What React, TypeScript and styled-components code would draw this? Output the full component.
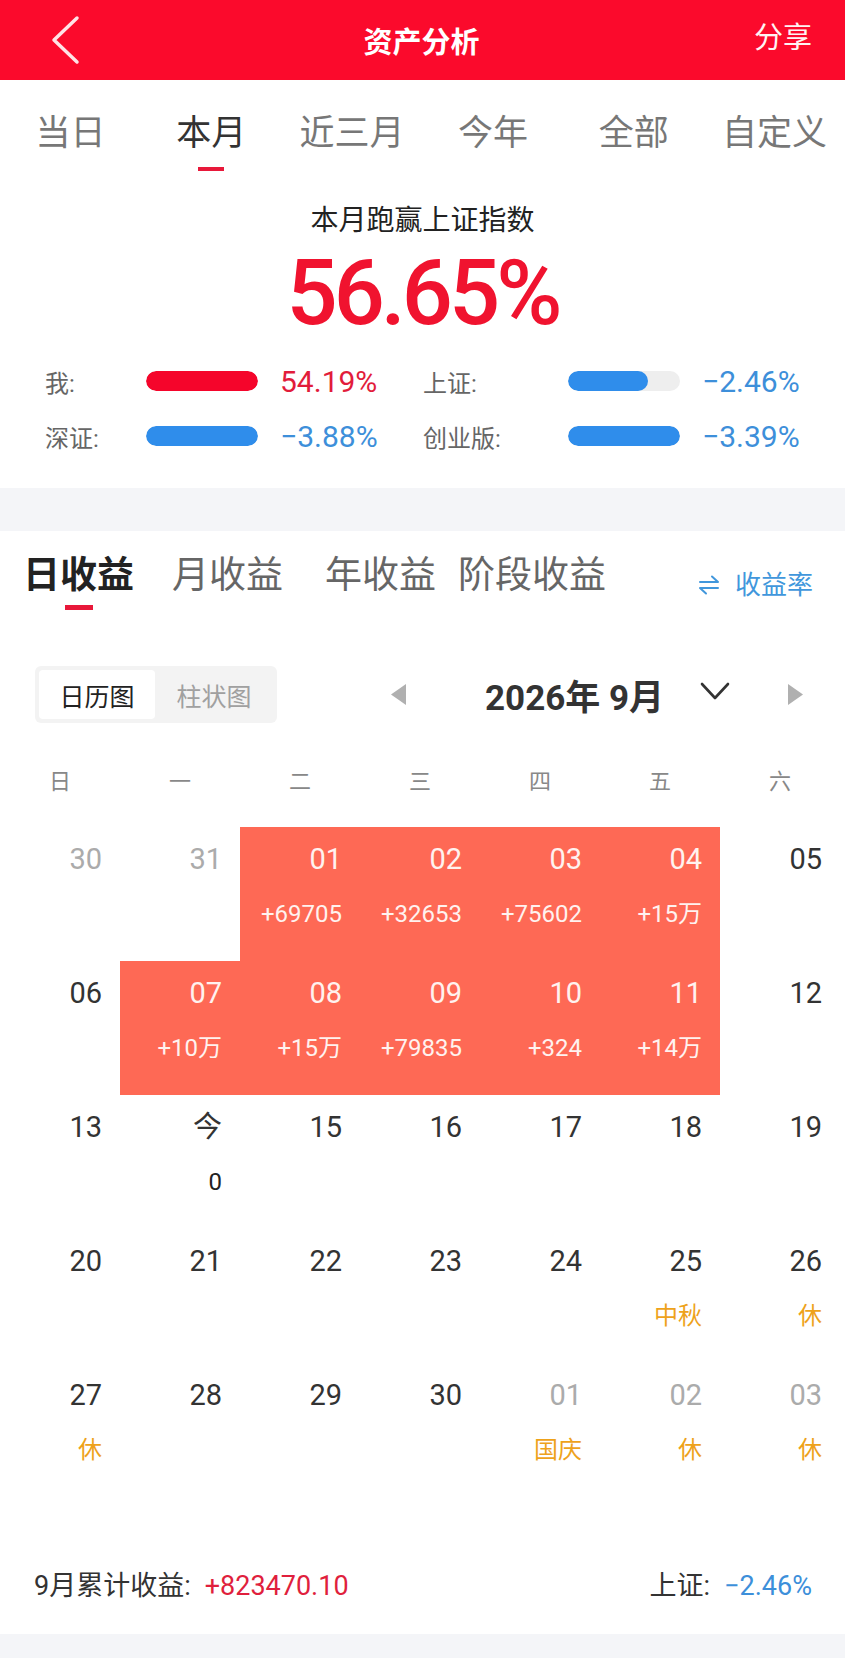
import React from 'react';
import styled, { createGlobalStyle } from 'styled-components';

const GlobalStyle = createGlobalStyle`
  html, body {
    margin: 0;
    padding: 0;
    background: #ffffff;
  }
  body {
    font-family: Roboto, "Noto Sans CJK SC", "Noto Sans", sans-serif;
    color: #333;
  }
`;

const Page = styled.div`
  width: 845px;
  min-height: 1658px;
  display: flex;
  flex-direction: column;
  background: #fff;
`;

const Header = styled.header`
  height: 80px;
  background: #fb0a2c;
  display: flex;
  align-items: center;
`;

const BackButton = styled.div`
  width: 40px;
  height: 50px;
  margin-left: 45px;
  display: flex;
`;

const Title = styled.h1`
  flex: 1;
  margin: 0;
  text-align: center;
  font-size: 29px;
  font-weight: 700;
  color: #fff;
  padding-left: 4px;
`;

const Share = styled.div`
  font-size: 29px;
  color: #fff3f3;
  padding-right: 33px;
  padding-bottom: 10px;
`;

const PeriodBar = styled.nav`
  display: flex;
  padding-top: 34px;
`;

const PeriodTab = styled.div<{ $active?: boolean }>`
  flex: 1;
  display: flex;
  flex-direction: column;
  align-items: center;
  font-size: 35px;
  line-height: 40px;
  color: ${(p) => (p.$active ? '#333' : '#777')};
`;

const TabMark = styled.span<{ $show?: boolean; $w: number; $h: number; $gap: number }>`
  display: block;
  width: ${(p) => p.$w}px;
  height: ${(p) => p.$h}px;
  margin-top: ${(p) => p.$gap}px;
  background: ${(p) => (p.$show ? '#e8183a' : 'transparent')};
`;

const Beat = styled.div`
  margin-top: 32px;
  text-align: center;
  font-size: 28px;
  line-height: 36px;
  color: #222;
`;

const BigNumber = styled.div`
  margin-top: 10px;
  text-align: center;
  font-size: 90px;
  line-height: 90px;
  font-weight: 500;
  letter-spacing: -4px;
  color: #f0132f;
`;

const StatsGrid = styled.div`
  display: grid;
  grid-template-columns: 101px 112px 165px 145px 112px 1fr;
  grid-auto-rows: 44px;
  row-gap: 11px;
  align-items: center;
  padding: 0 0 30px 45px;
  margin-top: 20px;
`;

const StatLabel = styled.span`
  font-size: 24px;
  color: #666;
`;

const Track = styled.div`
  height: 20px;
  border-radius: 10px;
  background: #eeeeee;
  overflow: hidden;
`;

const Fill = styled.div<{ $color: string }>`
  height: 100%;
  border-radius: 10px;
  background: ${(p) => p.$color};
`;

const StatValue = styled.span<{ $color: string }>`
  padding-left: 22px;
  font-size: 30px;
  color: ${(p) => p.$color};
`;

const Gap = styled.div`
  height: 43px;
  background: #f4f5f8;
`;

const IncomeBar = styled.div`
  display: flex;
  align-items: flex-start;
  padding: 23px 32px 0 23px;
`;

const IncomeTab = styled.div<{ $active?: boolean; $mr: number }>`
  display: flex;
  flex-direction: column;
  align-items: center;
  margin-right: ${(p) => p.$mr}px;
  font-size: 37px;
  line-height: 44px;
  font-weight: ${(p) => (p.$active ? 700 : 400)};
  color: ${(p) => (p.$active ? '#222' : '#666')};
`;

const RateSwitch = styled.div`
  margin-left: auto;
  margin-top: 14px;
  display: flex;
  align-items: center;
  gap: 16px;
  font-size: 26px;
  line-height: 34px;
  color: #4197dc;
`;

const ToolRow = styled.div`
  display: flex;
  align-items: center;
  margin-top: 56px;
  padding-left: 35px;
`;

const Segment = styled.div`
  width: 242px;
  height: 57px;
  box-sizing: border-box;
  padding: 4px;
  border-radius: 6px;
  background: #f3f3f3;
  display: flex;
`;

const SegItem = styled.div<{ $active?: boolean }>`
  width: ${(p) => (p.$active ? '116px' : 'auto')};
  flex: ${(p) => (p.$active ? 'none' : 1)};
  display: flex;
  align-items: center;
  justify-content: center;
  border-radius: 4px;
  font-size: 25px;
  background: ${(p) => (p.$active ? '#fff' : 'transparent')};
  color: ${(p) => (p.$active ? '#222' : '#a0a0a0')};
`;

const NavIcon = styled.svg<{ $ml: number }>`
  margin-left: ${(p) => p.$ml}px;
  flex: none;
`;

const MonthLabel = styled.div`
  margin-left: 79px;
  font-size: 35px;
  font-weight: 700;
  color: #333;
  white-space: nowrap;
`;

const WeekRow = styled.div`
  display: grid;
  grid-template-columns: repeat(7, 120px);
  margin-top: 44px;
`;

const WeekDay = styled.div`
  text-align: center;
  font-size: 22px;
  line-height: 30px;
  color: #888;
`;

const CalGrid = styled.div`
  display: grid;
  grid-template-columns: repeat(7, 120px);
  grid-auto-rows: 134px;
  margin-top: 30px;
`;

const Cell = styled.div<{ $gain?: boolean }>`
  display: flex;
  flex-direction: column;
  align-items: flex-end;
  padding-right: 18px;
  background: ${(p) => (p.$gain ? '#fe6955' : 'transparent')};
`;

const DayNum = styled.span<{ $tone: 'normal' | 'muted' | 'light' }>`
  margin-top: 14px;
  font-size: 29px;
  line-height: 36px;
  color: ${(p) => (p.$tone === 'light' ? '#fff2ef' : p.$tone === 'muted' ? '#ababab' : '#333')};
`;

const DaySub = styled.span<{ $color: string }>`
  margin-top: 21px;
  font-size: 24px;
  line-height: 32px;
  color: ${(p) => p.$color};
`;

const Summary = styled.div`
  display: flex;
  align-items: center;
  margin-top: 71px;
  padding: 0 33px 0 34px;
  font-size: 27px;
  line-height: 36px;
  color: #333;
`;

const SumValue = styled.span<{ $color: string }>`
  margin-left: 14px;
  font-size: 27px;
  color: ${(p) => p.$color};
`;

const Spacer = styled.div`
  flex: 1;
`;

const Footer = styled.div`
  margin-top: auto;
  height: 24px;
  background: #f4f5f8;
`;

const periods = ['当日', '本月', '近三月', '今年', '全部', '自定义'];

const stats = [
  { label: '我:', pct: 100, color: '#f5052b', value: '54.19%', text: '#e21c3b' },
  { label: '上证:', pct: 71, color: '#2f8deb', value: '\u22122.46%', text: '#3d8fda' },
  { label: '深证:', pct: 100, color: '#2f8deb', value: '\u22123.88%', text: '#3d8fda' },
  { label: '创业版:', pct: 100, color: '#2f8deb', value: '\u22123.39%', text: '#3d8fda' },
];

const incomeTabs = [
  { name: '日收益', mr: 38 },
  { name: '月收益', mr: 42 },
  { name: '年收益', mr: 22 },
  { name: '阶段收益', mr: 0 },
];

type Day = { d: string; other?: boolean; gain?: string; tag?: string };

const days: Day[] = [
  { d: '30', other: true }, { d: '31', other: true },
  { d: '01', gain: '+69705' }, { d: '02', gain: '+32653' }, { d: '03', gain: '+75602' }, { d: '04', gain: '+15万' },
  { d: '05' },
  { d: '06' },
  { d: '07', gain: '+10万' }, { d: '08', gain: '+15万' }, { d: '09', gain: '+79835' }, { d: '10', gain: '+324' }, { d: '11', gain: '+14万' },
  { d: '12' },
  { d: '13' }, { d: '今' }, { d: '15' }, { d: '16' }, { d: '17' }, { d: '18' }, { d: '19' },
  { d: '20' }, { d: '21' }, { d: '22' }, { d: '23' }, { d: '24' }, { d: '25', tag: '中秋' }, { d: '26', tag: '休' },
  { d: '27', tag: '休' }, { d: '28' }, { d: '29' }, { d: '30' },
  { d: '01', other: true, tag: '国庆' }, { d: '02', other: true, tag: '休' }, { d: '03', other: true, tag: '休' },
];

const weekDays = ['日', '一', '二', '三', '四', '五', '六'];

const App: React.FC = () => {
  return (
    <Page>
      <GlobalStyle />
      <Header>
        <BackButton>
          <svg width="40" height="50" viewBox="0 0 40 50">
            <polyline points="32,3 9,25 32,47" fill="none" stroke="#ffe3e6" strokeWidth="3.5" strokeLinecap="round" strokeLinejoin="round" />
          </svg>
        </BackButton>
        <Title>资产分析</Title>
        <Share>分享</Share>
      </Header>

      <PeriodBar>
        {periods.map((p) => (
          <PeriodTab key={p} $active={p === '本月'}>
            {p}
            <TabMark $show={p === '本月'} $w={26} $h={4} $gap={13} />
          </PeriodTab>
        ))}
      </PeriodBar>

      <Beat>本月跑赢上证指数</Beat>
      <BigNumber>56.65%</BigNumber>

      <StatsGrid>
        {stats.map((s) => (
          <React.Fragment key={s.label}>
            <StatLabel>{s.label}</StatLabel>
            <Track>
              <Fill $color={s.color} style={{ width: `${s.pct}%` }} />
            </Track>
            <StatValue $color={s.text}>{s.value}</StatValue>
          </React.Fragment>
        ))}
      </StatsGrid>

      <Gap />

      <IncomeBar>
        {incomeTabs.map((t, i) => (
          <IncomeTab key={t.name} $active={i === 0} $mr={t.mr}>
            {t.name}
            <TabMark $show={i === 0} $w={28} $h={5} $gap={7} />
          </IncomeTab>
        ))}
        <RateSwitch>
          <svg width="20" height="20" viewBox="0 0 20 20">
            <path d="M1 7 H19 L13 1.5 M19 13 H1 L7 18.5" fill="none" stroke="#4197dc" strokeWidth="2" strokeLinecap="round" strokeLinejoin="round" />
          </svg>
          收益率
        </RateSwitch>
      </IncomeBar>

      <ToolRow>
        <Segment>
          <SegItem $active>日历图</SegItem>
          <SegItem>柱状图</SegItem>
        </Segment>
        <NavIcon $ml={114} width="15" height="21" viewBox="0 0 15 21">
          <polygon points="15,0 0,10.5 15,21" fill="#b0b0b0" />
        </NavIcon>
        <MonthLabel>2026年 9月</MonthLabel>
        <NavIcon $ml={36} width="30" height="19" viewBox="0 0 30 19" style={{ marginBottom: 6 }}>
          <polyline points="2,2 15,16 28,2" fill="none" stroke="#333" strokeWidth="2.6" strokeLinecap="round" strokeLinejoin="round" />
        </NavIcon>
        <NavIcon $ml={58} width="15" height="21" viewBox="0 0 15 21">
          <polygon points="0,0 15,10.5 0,21" fill="#b0b0b0" />
        </NavIcon>
      </ToolRow>

      <WeekRow>
        {weekDays.map((w) => (
          <WeekDay key={w}>{w}</WeekDay>
        ))}
      </WeekRow>

      <CalGrid>
        {days.map((day, i) => (
          <Cell key={i} $gain={!!day.gain}>
            <DayNum $tone={day.gain ? 'light' : day.other ? 'muted' : 'normal'}>{day.d}</DayNum>
            {day.gain && <DaySub $color="#fff2ef">{day.gain}</DaySub>}
            {day.d === '今' && <DaySub $color="#222">0</DaySub>}
            {day.tag && <DaySub $color="#eea21b">{day.tag}</DaySub>}
          </Cell>
        ))}
      </CalGrid>

      <Summary>
        9月累计收益:
        <SumValue $color="#e01f3d">+823470.10</SumValue>
        <Spacer />
        上证:
        <SumValue $color="#3d8fda">{'\u22122.46%'}</SumValue>
      </Summary>

      <Footer />
    </Page>
  );
};

export default App;
